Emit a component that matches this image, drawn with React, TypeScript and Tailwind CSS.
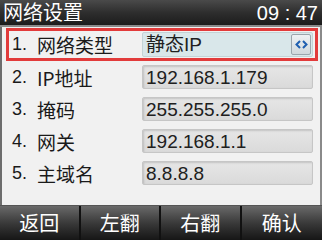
import React from "react";

const rows = [
  { n: "1.", label: "网络类型", value: "静态IP", sel: true },
  { n: "2.", label: "IP地址", value: "192.168.1.179" },
  { n: "3.", label: "掩码", value: "255.255.255.0" },
  { n: "4.", label: "网关", value: "192.168.1.1" },
  { n: "5.", label: "主域名", value: "8.8.8.8" },
];

const font = { fontFamily: '"Liberation Sans", "Noto Sans CJK SC", sans-serif' };

export default function App() {
  return (
    <div className="w-[322px] h-[240px] flex flex-col overflow-hidden bg-white" style={font}>
      <div className="h-[27px] flex items-center justify-between px-[3px] bg-gradient-to-b from-[#4a4a4a] via-[#2e2e2e] to-[#1c1c1c] text-white border-b-2 border-[#8a8a8a]">
        <span className="text-[20px] leading-none">网络设置</span>
        <span className="text-[20px] leading-none pr-[1px]">09 : 47</span>
      </div>
      <div className="flex-1 flex flex-col bg-[#f1f1f1] border-l-2 border-r-[2px] border-l-[#6d6d6d] border-r-[#8a8a8a] pt-[1px]">
        {rows.map((r) => (
          <div
            key={r.n}
            className={
              r.sel
                ? "h-[33px] ml-[4px] mr-[2px] flex items-center border-[3px] border-[#e23b3b] pl-[3px] pr-[2px]"
                : "h-[32px] ml-[4px] mr-[2px] flex items-center border-[3px] border-transparent pl-[3px] pr-[2px]"
            }
          >
            <span className="w-[25px] text-[18px] text-[#1a1a1a]">{r.n}</span>
            <span className="w-[105px] text-[19px] text-[#1a1a1a] leading-none" style={{ fontFamily: '"Noto Sans CJK SC", sans-serif' }}>
              {r.label}
            </span>
            <div
              className={
                r.sel
                  ? "flex-1 h-[25px] flex items-center justify-between rounded-[2px] bg-[#d9e7ea] border border-[#c4d3d6] pl-[3px] pr-[1px]"
                  : "flex-1 h-[24px] flex items-center rounded-[2px] bg-gradient-to-b from-[#e6e6e6] to-[#dadada] border border-[#c6c6c6] shadow-[inset_1px_1px_2px_rgba(0,0,0,0.15)] pl-[3px]"
              }
            >
              <span className="text-[19px] text-[#202020] leading-none">{r.value}</span>
              {r.sel && (
                <div className="w-[20px] h-[21px] flex items-center justify-center rounded-[2px] bg-gradient-to-b from-[#eef2f4] to-[#d0d8dc] border border-[#9aa6ad]">
                  <svg width="13" height="9" viewBox="0 0 13 9">
                    <path d="M5 1 L1.5 4.5 L5 8" stroke="#1f5fb0" strokeWidth="2" fill="none" />
                    <path d="M8 1 L11.5 4.5 L8 8" stroke="#1f5fb0" strokeWidth="2" fill="none" />
                  </svg>
                </div>
              )}
            </div>
          </div>
        ))}
      </div>
      <div className="h-[35px] grid grid-cols-4 bg-[#1a1a1a] border-t border-[#555]">
        {["返回", "左翻", "右翻", "确认"].map((t, i) => (
          <div
            key={t}
            className={
              (i < 3 ? "border-r-2 border-[#111] " : "") +
              "flex items-center justify-center text-white text-[20px] bg-gradient-to-b from-[#6a6a6a] via-[#3a3a3a] to-[#161616]"
            }
            style={{ fontFamily: '"Noto Sans CJK SC", sans-serif' }}
          >
            {t}
          </div>
        ))}
      </div>
    </div>
  );
}
